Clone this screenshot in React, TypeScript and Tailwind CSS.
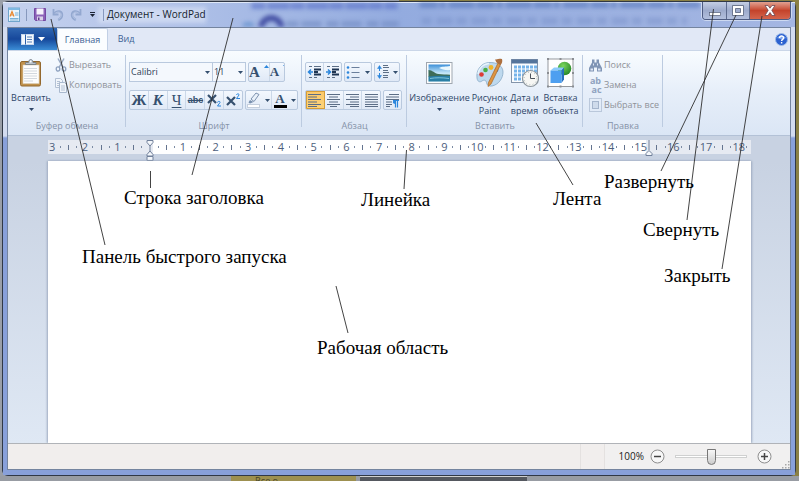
import React from 'react';

type IconProps = { className?: string };

const RULER_COLUMNS = Array.from({ length: 86 }, (_, i) => i);

const CALLOUTS = [
  { text: 'Строка заголовка', place: 'left-[124px] top-[186px]' },
  { text: 'Линейка', place: 'left-[361px] top-[188px]' },
  { text: 'Лента', place: 'left-[553px] top-[187px]' },
  { text: 'Развернуть', place: 'left-[604px] top-[170px]' },
  { text: 'Свернуть', place: 'left-[643px] top-[218px]' },
  { text: 'Закрыть', place: 'left-[664px] top-[264px]' },
  { text: 'Панель быстрого запуска', place: 'left-[82px] top-[245px]' },
  { text: 'Рабочая область', place: 'left-[317px] top-[336px]' },
];

const CALLOUT_LINES = [
  [51, 19, 105, 245],
  [233, 18, 192, 175],
  [150.5, 171, 150.5, 188],
  [406.5, 150, 404, 189],
  [536, 123, 573, 185],
  [336, 286, 348, 333],
  [713.5, 9, 687, 220],
  [736, 15, 661, 171],
  [762, 16, 722, 269],
];

const Arrow: React.FC<IconProps> = ({ className = '' }) => (
  <svg viewBox="0 0 5 3" className={`h-[3px] w-[5px] shrink-0 ${className}`} fill="currentColor">
    <path d="M0 0h5L2.5 3z" />
  </svg>
);

const DocIcon = () => (
  <svg viewBox="0 0 12 15" className="h-[15px] w-3">
    <rect x="0.5" y="1" width="11" height="13.5" fill="#eaf5fc" stroke="#6fa5cc" />
    <path d="M0.5 1h11v2h-11z" fill="#7fb9e2" />
    <path d="M2 9.5 4 4.5 6 9.5M2.8 8h2.5" stroke="#e8862c" strokeWidth="1.2" fill="none" />
    <path d="M7 6h3.500M7 8h3.500M2 11.500h8.500M2 13h8.500" stroke="#79b0d6" />
  </svg>
);

const SaveIcon = () => (
  <svg viewBox="0 0 12 13" className="h-[13px] w-3">
    <path d="M0.500 0.500h11v12H1.500l-1-1z" fill="#8c62b8" stroke="#7448a2" />
    <rect x="2.500" y="0.500" width="7" height="6" fill="#f5f1fb" />
    <rect x="3" y="8.500" width="6" height="4" fill="#d9d2e8" />
    <rect x="4" y="9.500" width="1.500" height="2.500" fill="#5f3a8c" />
  </svg>
);

const UndoIcon: React.FC<IconProps> = ({ className = '' }) => (
  <svg viewBox="0 0 12 13" className={`h-[13px] w-3 ${className}`} fill="none">
    <path d="M1.500 1v5.500h5" stroke="#93a8d0" strokeWidth="1.800" />
    <path d="M2.500 5.500C5 2 10 3 10 7c0 2.500-1.800 4-3.800 5" stroke="#93a8d0" strokeWidth="2.400" />
    <path d="M3 5.500C5.500 3 9.300 4 9.300 7c0 2-1.200 3.200-2.800 4.200" stroke="#b7c6e4" strokeWidth="0.800" />
  </svg>
);

const ClipboardIcon = () => (
  <svg viewBox="0 0 24 28" className="h-7 w-6">
    <rect x="1.500" y="2.500" width="20" height="24.500" rx="1.500" fill="#c0914c" stroke="#93682e" />
    <rect x="4" y="6" width="16" height="18.500" fill="#fdfdfd" stroke="#d9cfbd" strokeWidth="0.600" />
    <path d="M5 9.500h13M5 12h13M5 14.500h13M5 17h13M5 19.500h13M5 22h9" stroke="#d2d8df" />
    <path d="M6.500 5.500V3.500h3c0-4 4.500-4 4.500 0h3v2z" fill="#b9c2cb" stroke="#6f7983" strokeWidth="0.800" />
    <circle cx="11.700" cy="2.500" r="0.900" fill="#fff" />
  </svg>
);

const CutIcon = () => (
  <svg viewBox="0 0 12 14" className="h-[14px] w-3" fill="none">
    <path d="m3 0.500 5 9M9 0.500l-5 9" stroke="#9aabc4" strokeWidth="1.500" />
    <ellipse cx="3" cy="11" rx="1.800" ry="2.100" stroke="#8fa3c0" strokeWidth="1.300" />
    <ellipse cx="9" cy="11" rx="1.800" ry="2.100" stroke="#8fa3c0" strokeWidth="1.300" />
  </svg>
);

const CopyIcon = () => (
  <svg viewBox="0 0 12 15" className="h-[15px] w-3">
    <path d="M0.500 0.500h5l2 2v7h-7z" fill="#f1f5fa" stroke="#b3c1d4" />
    <path d="M2 3.500h3M2 5.500h3M2 7.500h2" stroke="#b3c1d4" />
    <path d="M4.500 4.500h5l2 2v8h-7z" fill="#f1f5fa" stroke="#a9b9ce" />
    <path d="M6 8h4M6 10h4M6 12h4" stroke="#b3c1d4" />
  </svg>
);

const IndentIcon: React.FC<{ right?: boolean }> = ({ right = false }) => (
  <svg viewBox="0 0 15 14" className="h-[14px] w-[15px]" fill="none">
    <path d="M2 1.500h3M7 1.500h7M2 12.500h3M7 12.500h3" stroke="#5d6f86" />
    <path d="M7 4.500h7M7 7h4M7 9.500h7" stroke="#1f3552" strokeWidth="2" />
    <path
      d={right ? 'M1 7h4M3 4.500 5.500 7 3 9.500' : 'M2 7h4M4 4.500 1.500 7 4 9.500'}
      stroke="#2b86dc"
      strokeWidth="1.500"
    />
  </svg>
);

const BulletsIcon = () => (
  <svg viewBox="0 0 15 14" className="h-[14px] w-[15px]">
    <path d="M5.500 2.500h8M5.500 7.500h8M5.500 12.500h8" stroke="#6a7f9c" />
    <circle cx="2" cy="2.500" r="1.300" fill="#2b86dc" />
    <circle cx="2" cy="7.500" r="1.300" fill="#2b86dc" />
    <circle cx="2" cy="12.500" r="1.300" fill="#2b86dc" />
  </svg>
);

const SpacingIcon = () => (
  <svg viewBox="0 0 12 16" className="h-4 w-3" fill="none">
    <path d="M2.500 2v12" stroke="#2b86dc" strokeDasharray="5 2" />
    <path d="M0.500 4.500 2.500 1.500l2 3zM0.500 11.500l2 3 2-3z" fill="#2b86dc" stroke="#2b86dc" strokeWidth="0.500" />
    <path d="M6 1.500h5M6 3.500h6M6 6.500h5M6 8.500h6M6 11.500h5M6 13.500h5" stroke="#5d6f86" />
  </svg>
);

const ALIGN_PATHS = {
  left: 'M0 1.500h13M0 4h9M0 6.500h13M0 9h9M0 11.500h13M0 13.500h9',
  center: 'M0 1.500h13M2 4h9M0 6.500h13M2 9h9M0 11.500h13M3 13.500h7',
  right: 'M0 1.500h13M4 4h9M0 6.500h13M4 9h9M0 11.500h13M4 13.500h9',
  justify: 'M0 1.500h13M0 4h13M0 6.500h13M0 9h13M0 11.500h13M0 13.500h13',
};

const AlignIcon: React.FC<{ kind: keyof typeof ALIGN_PATHS }> = ({ kind }) => (
  <svg viewBox="0 0 13 15" className="h-[15px] w-[13px]">
    <path d={ALIGN_PATHS[kind]} stroke="#5b6d85" />
  </svg>
);

const ParagraphIcon = () => (
  <svg viewBox="0 0 14 15" className="h-[15px] w-[14px]">
    <path d="M3 1.500h10M0 4h13M0 6.500h13M0 9h6M0 11.500h6M0 13.500h4" stroke="#5b6d85" />
    <path d="M9.500 7.500v7M11.500 7.500v7M7 7.500h6" stroke="#2b86dc" strokeWidth="1.200" />
    <path d="M9.500 7C6 7 6 11 9.500 11z" fill="#2b86dc" />
  </svg>
);

const PenIcon = () => (
  <svg viewBox="0 0 14 16" className="h-4 w-[14px]">
    <path d="m4 7 5-6 3 1.500L7 9.500z" fill="#e9f1fa" stroke="#6f86a5" strokeWidth="0.900" />
    <path d="m3 8 3.500 2-3.500 1.500-1.500-1z" fill="#7990ae" />
    <rect x="0.500" y="12.500" width="12" height="3" fill="#fff" stroke="#c5cfdd" />
  </svg>
);

const PictureIcon = () => (
  <svg viewBox="0 0 27 24" className="h-6 w-[27px]">
    <defs>
      <linearGradient id="sky" x1="0" y1="0" x2="0" y2="1">
        <stop offset="0" stopColor="#3c8fd8" />
        <stop offset="0.500" stopColor="#c3e6f8" />
        <stop offset="1" stopColor="#d5f0fa" />
      </linearGradient>
    </defs>
    <rect x="0.500" y="1.500" width="25.500" height="21" fill="#fdfdfd" stroke="#9fa7b0" />
    <rect x="2.500" y="3.500" width="21.500" height="17" fill="url(#sky)" />
    <path d="M13 7c3-2 7-1 11-2v4c-4 1-8-1-11-2z" fill="#eaf7fd" />
    <path d="M2.500 9c4 0 6 3.500 10 4s7 .5 11.500.8v2.200H2.500z" fill="#3e6d58" />
    <path d="M2.500 15.500c8-1 15-.8 21.500-.5v5.500H2.500z" fill="#2a7fa5" />
    <path d="M4 17.500c6-1 12-1 19 0" stroke="#7cc3da" fill="none" />
  </svg>
);

const PaintIcon = () => (
  <svg viewBox="0 0 28 30" className="h-[30px] w-7">
    <path
      d="M13 4.500C5 5 0 12 1 20c.5 4 3 4.500 5 3s4-1 4.500 1.500c.5 3 2.500 4 5.500 3.500 7-1.500 11-8 11-14C27 8 21 4 13 4.500z"
      fill="#bed9ee"
      stroke="#88a9c5"
      strokeWidth="0.800"
    />
    <path d="M13 5.500C7 6 3 10.500 2 16" stroke="#e8f4fc" strokeWidth="1.500" fill="none" />
    <circle cx="5.500" cy="16.500" r="2.300" fill="#dc3b36" />
    <circle cx="9.500" cy="12" r="2.300" fill="#49ae47" />
    <circle cx="15" cy="9.500" r="2.400" fill="#f0b52c" />
    <circle cx="20.500" cy="12" r="1.900" fill="#3973d0" />
    <path d="m22 5 2.500 1.500L15 26l-3 2.500.5-4z" fill="#dd9542" stroke="#a76524" strokeWidth="0.700" />
    <path d="M20.500 4.500 19 1.500c2 0 3-1.500 7-.5.500 2 .500 4-1.500 6z" fill="#ad7040" />
  </svg>
);

const CalendarIcon = () => (
  <svg viewBox="0 0 28 30" className="h-[30px] w-7">
    <rect x="0.500" y="1.500" width="26" height="23" fill="#fbfdff" stroke="#8495aa" />
    <rect x="0.500" y="1.500" width="26" height="4" fill="#54749b" />
    <g fill="#76b4ea">
      {[7.5, 11.5, 15.5, 19.5].map((y) =>
        [3, 7, 11, 15, 19, 23].map((x) => <rect key={`${x}-${y}`} x={x} y={y} width="3" height="3" />),
      )}
    </g>
    <circle cx="19.500" cy="20.500" r="8" fill="#f7f7f4" stroke="#8d969d" strokeWidth="1.200" />
    <circle cx="19.500" cy="20.500" r="6.300" fill="none" stroke="#9aa" strokeDasharray="0.800 2.500" />
    <path d="M19.500 15.500v5h4.500" stroke="#4b535b" fill="none" />
  </svg>
);

const ObjectIcon = () => (
  <svg viewBox="0 0 27 30" className="h-[30px] w-[27px]">
    <defs>
      <radialGradient id="ball" cx="0.400" cy="0.300" r="0.800">
        <stop offset="0" stopColor="#7bd65d" />
        <stop offset="1" stopColor="#1d7d22" />
      </radialGradient>
    </defs>
    <rect x="1" y="1" width="25" height="27.500" fill="#fff" stroke="#7d8085" strokeWidth="0.800" />
    <circle cx="17.500" cy="10.500" r="6.800" fill="url(#ball)" />
    <path d="M3.500 12.500 7 9.500h10l-2.500 3z" fill="#8ccbfb" />
    <path d="M14.500 12.500 17 9.500v12l-2.500 3.500z" fill="#286fc0" />
    <rect x="3.500" y="12.500" width="11" height="12.500" fill="#4d9ff0" />
    <path
      d="M0 0h2v2H0zM12.500 0h2v2h-2zM25 0h2v2h-2zM0 14h2v2H0zM25 14h2v2h-2zM0 27.500h2v2H0zM12.500 27.500h2v2h-2zM25 27.500h2v2h-2z"
      fill="#8a8d92"
    />
  </svg>
);

const FindIcon = () => (
  <svg viewBox="0 0 13 13" className="h-[13px] w-[13px]" fill="#8095b5">
    <path d="M3 0.500h2.500v3H7.500v-3H10v3l3 5.500v3.500H8V8.500H5v4H0V9L3 3.500z" />
    <path d="M1.500 9.500h2.500v2H1.500zM9 9.500h2.500v2H9zM4 4.500h1v2H4zM8 4.500h1v2H8z" fill="#dfe8f5" />
  </svg>
);

const SelectAllIcon = () => (
  <svg viewBox="0 0 13 14" className="h-[14px] w-[13px]" fill="none">
    <rect x="0.500" y="0.500" width="12" height="13" stroke="#93a4bf" strokeDasharray="1 1" />
    <rect x="3.500" y="3.500" width="6" height="7" fill="#cfdbeb" stroke="#a5b5cc" />
  </svg>
);

const Group: React.FC<{ label: string; className: string; children: React.ReactNode }> = ({
  label,
  className,
  children,
}) => (
  <section
    aria-label={label}
    className={`relative flex shrink-0 flex-col pt-1 after:absolute after:right-0 after:top-1 after:bottom-2 after:w-px after:bg-[#bccbe0] after:content-[''] ${className}`}
  >
    <div className="flex-1">{children}</div>
    <div className="h-[18px] text-center text-[9px] leading-[18px] text-[#8592a8]">{label}</div>
  </section>
);

const Strip: React.FC<{ className?: string; children: React.ReactNode }> = ({ className = '', children }) => (
  <div
    className={`flex h-5 divide-x divide-[#cbd8e8] overflow-hidden rounded-xs border border-[#b9c9de] bg-linear-to-b from-[#f3f8fe] to-[#e0e9f6] text-[#35506f] ${className}`}
  >
    {children}
  </div>
);

const Tool: React.FC<{ label: string; className?: string; children: React.ReactNode }> = ({
  label,
  className = '',
  children,
}) => (
  <button type="button" aria-label={label} className={`flex flex-1 items-center justify-center gap-1 ${className}`}>
    {children}
  </button>
);

const BigButton: React.FC<{ icon: React.ReactNode; className: string; children: React.ReactNode }> = ({
  icon,
  className,
  children,
}) => (
  <button
    type="button"
    className={`flex shrink-0 flex-col items-center text-[9px] leading-[13px] text-[#2e4668] ${className}`}
  >
    <span className="flex h-9 items-center">{icon}</span>
    {children}
  </button>
);

const SmallButton: React.FC<{ icon: React.ReactNode; children: React.ReactNode }> = ({ icon, children }) => (
  <button
    type="button"
    className="flex h-5 items-center gap-[2px] whitespace-nowrap text-[9px] text-[#8f9299]"
  >
    <span className="flex w-[13px] justify-center">{icon}</span>
    {children}
  </button>
);

const TitleBar = () => (
  <header className="relative flex h-[25px] items-center overflow-hidden bg-linear-to-r from-[#c6d2ee] via-[#93abdf] to-[#a4b6e2] pl-[5px] shadow-[inset_0_1px_0_#dfe8f8]">
    <svg
      className="absolute inset-0 h-full w-full blur-[2px]"
      preserveAspectRatio="none"
      viewBox="0 0 791 25"
      fill="none"
    >
      <path d="M248 4h146" stroke="#5c74cb" strokeWidth="6" strokeDasharray="14 2 22 1" opacity="0.700" />
      <path d="M240 24a7 7 0 0 1 10 0" stroke="#6a94cf" strokeWidth="4" />
      <path d="M258 26a10 10 0 0 1 20 0" stroke="#4450a4" strokeWidth="6" />
      <path d="M283 22h112" stroke="#7089bf" strokeWidth="6" strokeDasharray="12 3 20 5" opacity="0.600" />
      <path d="M416 3h280" stroke="#4a6cb6" strokeWidth="5" strokeDasharray="18 2 6 3 26 2" opacity="0.600" />
      <path d="M418 19h265" stroke="#7089c4" strokeWidth="7" strokeDasharray="10 5 16 4" opacity="0.400" />
      <path d="M95 13h108" stroke="#eaf0fb" strokeWidth="16" opacity="0.500" />
    </svg>
    <div className="relative flex items-center">
      <DocIcon />
      <span className="ml-[6px] h-3 w-px bg-[#8798bd]" />
      <button type="button" aria-label="Сохранить" className="ml-[7px]">
        <SaveIcon />
      </button>
      <button type="button" aria-label="Отменить" className="ml-[6px]">
        <UndoIcon />
      </button>
      <button type="button" aria-label="Вернуть" className="ml-[6px]">
        <UndoIcon className="-scale-x-100" />
      </button>
      <button
        type="button"
        aria-label="Настройка панели быстрого доступа"
        className="ml-2 flex flex-col items-center gap-px text-[#1c2535]"
      >
        <span className="h-px w-[5px] bg-[#1c2535]" />
        <Arrow />
      </button>
      <span className="ml-2 h-3 w-px bg-[#8798bd]" />
      <h1 className="ml-[3px] whitespace-nowrap text-[10px] text-[#151d2d]">Документ - WordPad</h1>
    </div>
    <div className="relative mr-1 ml-auto flex h-[18px] self-start overflow-hidden rounded-b-[4px] border border-t-0 border-[#4d5b80] shadow-[0_0_0_1px_#cdd9f1]">
      <button
        type="button"
        aria-label="Свернуть"
        className="flex w-6 items-center justify-center border-r border-[#5d6b8e] bg-linear-to-b from-[#c4cee4] via-[#9dabcc] to-[#b3c0dd]"
      >
        <svg viewBox="0 0 12 12" className="h-3 w-3">
          <rect x="0.500" y="7.500" width="11" height="3" fill="#fff" stroke="#535f78" strokeWidth="0.700" />
        </svg>
      </button>
      <button
        type="button"
        aria-label="Развернуть"
        className="flex w-[23px] items-center justify-center border-r border-[#5d6b8e] bg-linear-to-b from-[#c4cee4] via-[#9dabcc] to-[#b3c0dd]"
      >
        <svg viewBox="0 0 12 11" className="h-[11px] w-3">
          <path d="M0.500 0.500h11v10h-11zM3.500 3.500v4h5v-4z" fill="#fff" fillRule="evenodd" stroke="#535f78" strokeWidth="0.800" />
        </svg>
      </button>
      <button
        type="button"
        aria-label="Закрыть"
        className="flex w-10 items-center justify-center bg-linear-to-b from-[#e0a091] via-[#c4432b] to-[#d4644c]"
      >
        <svg viewBox="0 0 12 11" className="h-[11px] w-3">
          <path
            d="M1 0.500h3L6 3.200 8 0.500h3L7.800 5.300 11 10.500H8L6 7.500l-2 3H1l3.200-5.200z"
            fill="#fff"
            stroke="#6d4a55"
            strokeWidth="0.800"
          />
        </svg>
      </button>
    </div>
  </header>
);

const Tabs = () => (
  <nav className="flex h-[22px] bg-[#e1e8f6]">
    <button
      type="button"
      aria-label="Меню"
      className="flex w-[49px] items-center justify-center gap-1 bg-linear-to-b from-[#2f66b1] via-[#17489b] to-[#3c8dd6] text-white"
    >
      <svg viewBox="0 0 13 11" className="h-[11px] w-[13px]">
        <rect x="0.500" y="0.500" width="12" height="10" fill="#f4f8fd" stroke="#c7d7ec" />
        <path d="M4.500 0.500v10" stroke="#2b5ea8" />
        <path d="M6 3h5M6 5.500h5M6 8h5" stroke="#5780b8" />
      </svg>
      <svg viewBox="0 0 7 4" className="h-1 w-[7px]" fill="#fff">
        <path d="M0 0h7L3.500 4z" />
      </svg>
    </button>
    <button
      type="button"
      className="w-[51px] rounded-t-xs border border-b-0 border-[#c2d0e5] bg-[#fbfdff] text-center text-[9px] text-[#3c5f95]"
    >
      Главная
    </button>
    <button type="button" className="w-9 text-center text-[9px] text-[#3c5f95]">
      Вид
    </button>
    <button type="button" aria-label="Справка" className="mr-[2px] ml-auto">
      <svg viewBox="0 0 13 13" className="h-[13px] w-[13px]">
        <circle cx="6.500" cy="6.500" r="6" fill="#2d62d0" stroke="#9dbbe8" />
        <path d="M2 5a5 4 0 0 1 9 0c-3 1.500-6 1.500-9 0z" fill="#7ba4ee" />
        <path d="M4.600 5c0-2.600 4-2.600 4 0 0 1.400-2 1.400-2 3M6.600 9v1.500" stroke="#fff" strokeWidth="1.400" fill="none" />
      </svg>
    </button>
  </nav>
);

const FontGroup = () => (
  <Group label="Шрифт" className="w-[176px]">
    <div className="mt-[7px] ml-[3px] flex gap-[2px]">
      <div className="flex text-[#35506f]">
        <label className="relative flex items-center">
          <select
            aria-label="Семейство шрифтов"
            className="h-5 w-[84px] appearance-none border border-[#b9c9de] bg-[#f4f8fd] pl-[1px] text-[9px] text-[#2e3f58]"
          >
            <option>Calibri</option>
          </select>
          <Arrow className="pointer-events-none absolute right-[3px]" />
        </label>
        <label className="relative flex items-center">
          <select
            aria-label="Размер шрифта"
            className="h-5 w-[33px] appearance-none border border-l-0 border-[#b9c9de] bg-[#f4f8fd] pl-[1px] text-[9px] text-[#2e3f58]"
          >
            <option>11</option>
          </select>
          <Arrow className="pointer-events-none absolute right-[3px]" />
        </label>
      </div>
      <Strip className="w-[37px] font-['Liberation_Serif',serif] font-bold">
        <Tool label="Увеличить размер" className="gap-0">
          <span className="text-[15px] leading-5">A</span>
          <Arrow className="-mt-3 rotate-180 text-[#2b86dc]" />
        </Tool>
        <Tool label="Уменьшить размер" className="gap-0">
          <span className="text-[13px] leading-5">A</span>
          <Arrow className="-mt-3 text-[#2b86dc]" />
        </Tool>
      </Strip>
    </div>
    <div className="mt-2 ml-[3px] flex gap-[2px]">
      <Strip className="w-[114px] font-['Liberation_Serif',serif] text-[15px] font-bold leading-4">
        <Tool label="Полужирный">Ж</Tool>
        <Tool label="Курсив" className="italic">
          К
        </Tool>
        <Tool label="Подчеркнутый" className="font-normal underline underline-offset-2">
          Ч
        </Tool>
        <Tool label="Зачеркнутый" className="font-['Liberation_Sans',sans-serif] text-[9px] line-through">
          abc
        </Tool>
        <Tool label="Подстрочный знак">
          <svg viewBox="0 0 14 14" className="h-[14px] w-[14px]" fill="none">
            <path d="m1 2 8 8M9 2l-8 8" stroke="#35506f" strokeWidth="2.200" />
            <path d="M10.500 9.500c0-1.500 3-1.500 2.500 0L10.500 13H14" stroke="#2b86dc" />
          </svg>
        </Tool>
        <Tool label="Надстрочный знак">
          <svg viewBox="0 0 14 14" className="h-[14px] w-[14px]" fill="none">
            <path d="m1 4 8 8M9 4l-8 8" stroke="#35506f" strokeWidth="2.200" />
            <path d="M10.500 2c0-1.500 3-1.500 2.500 0L10.500 5.500H14" stroke="#2b86dc" />
          </svg>
        </Tool>
      </Strip>
      <Strip className="w-[53px]">
        <Tool label="Цвет выделения текста">
          <PenIcon />
          <Arrow />
        </Tool>
        <Tool label="Цвет текста">
          <span className="flex flex-col items-center">
            <span className="font-['Liberation_Serif',serif] text-[13px] font-bold leading-[12px]">A</span>
            <span className="h-[3px] w-[13px] bg-black" />
          </span>
          <Arrow />
        </Tool>
      </Strip>
    </div>
  </Group>
);

const ParagraphGroup = () => (
  <Group label="Абзац" className="w-[105px]">
    <div className="mt-[7px] ml-[3px] flex gap-[2px]">
      <Strip className="w-[37px]">
        <Tool label="Уменьшить отступ">
          <IndentIcon />
        </Tool>
        <Tool label="Увеличить отступ">
          <IndentIcon right />
        </Tool>
      </Strip>
      <Strip className="w-7">
        <Tool label="Список">
          <BulletsIcon />
          <Arrow />
        </Tool>
      </Strip>
      <Strip className="w-[26px]">
        <Tool label="Межстрочный интервал">
          <SpacingIcon />
          <Arrow />
        </Tool>
      </Strip>
    </div>
    <div className="mt-2 ml-[3px] flex gap-[2px]">
      <Strip className="w-[76px]">
        <Tool
          label="По левому краю"
          className="bg-linear-to-b from-[#fbc868] to-[#fbd37b] outline-1 -outline-offset-1 outline-[#d59d38]"
        >
          <AlignIcon kind="left" />
        </Tool>
        <Tool label="По центру">
          <AlignIcon kind="center" />
        </Tool>
        <Tool label="По правому краю">
          <AlignIcon kind="right" />
        </Tool>
        <Tool label="По ширине">
          <AlignIcon kind="justify" />
        </Tool>
      </Strip>
      <Strip className="w-[19px]">
        <Tool label="Абзац">
          <ParagraphIcon />
        </Tool>
      </Strip>
    </div>
  </Group>
);

const Ribbon = () => (
  <div className="flex h-[86px] overflow-hidden border-t border-b border-t-[#cad6e8] border-b-[#b3c1d6] bg-linear-to-b from-[#f8fcff] via-[#e6eef9] to-[#dbe6f5]">
    <Group label="Буфер обмена" className="w-[118px]">
      <div className="flex">
        <BigButton icon={<ClipboardIcon />} className="w-[46px]">
          <span>Вставить</span>
          <Arrow className="mt-1" />
        </BigButton>
        <div className="flex flex-col">
          <SmallButton icon={<CutIcon />}>Вырезать</SmallButton>
          <SmallButton icon={<CopyIcon />}>Копировать</SmallButton>
        </div>
      </div>
    </Group>
    <FontGroup />
    <ParagraphGroup />
    <Group label="Вставить" className="w-[176px]">
      <div className="flex">
        <BigButton icon={<PictureIcon />} className="w-[65px]">
          <span>Изображение</span>
          <Arrow className="mt-1" />
        </BigButton>
        <BigButton icon={<PaintIcon />} className="w-[35px]">
          <span>
            Рисунок
            <br />
            Paint
          </span>
        </BigButton>
        <BigButton icon={<CalendarIcon />} className="w-[35px]">
          <span className="whitespace-nowrap">
            Дата и
            <br />
            время
          </span>
        </BigButton>
        <BigButton icon={<ObjectIcon />} className="w-[37px]">
          <span>
            Вставка
            <br />
            объекта
          </span>
        </BigButton>
      </div>
    </Group>
    <Group label="Правка" className="w-20">
      <div className="ml-[6px] flex flex-col">
        <SmallButton icon={<FindIcon />}>Поиск</SmallButton>
        <SmallButton
          icon={
            <span className="flex flex-col text-[9px] font-bold leading-[9px] text-[#8fa2c0]">
              <span>ab</span>
              <span className="pl-[2px]">ac</span>
            </span>
          }
        >
          Замена
        </SmallButton>
        <SmallButton icon={<SelectAllIcon />}>Выбрать все</SmallButton>
      </div>
    </Group>
  </div>
);

const RulerMark: React.FC<{ index: number }> = ({ index }) => {
  if (index === 12) {
    return (
      <svg viewBox="0 0 8 22" className="h-[22px] w-2 shrink-0 self-start" fill="#f4f7fb" stroke="#71809a">
        <path d="M1 0.500h6v2l-3 3.500-3-3.500zM4 6v5M4 11l3 3.500v1.500H1v-1.500zM1 16.500h6v4H1z" />
      </svg>
    );
  }
  if (index === 73) {
    return (
      <svg viewBox="0 0 8 16" className="h-4 w-2 shrink-0 self-start" fill="#f4f7fb" stroke="#71809a">
        <path d="M4 0v10M4 10.500l3 3v2H1v-2z" />
      </svg>
    );
  }
  if (index % 4 === 0) return <span className="text-[11px] leading-[14px]">{Math.abs(index / 4 - 3)}</span>;
  return <span className={index % 2 ? 'h-[2px] w-px bg-[#7c8ba3]' : 'h-[5px] w-px bg-[#64748f]'} />;
};

const Ruler = () => (
  <div className="h-[25px] bg-[#c8d2e2] pt-1 pr-[39px] pl-10">
    <div className="grid h-[14px] grid-cols-[repeat(86,minmax(0,1fr))] bg-[linear-gradient(to_right,#e6eaf2_15%,#fff_15%,#fff_85%,#e6eaf2_85%)] text-[#4c5e7c]">
      {RULER_COLUMNS.map((i) => (
        <div key={i} className="flex h-[14px] items-center justify-center">
          <RulerMark index={i} />
        </div>
      ))}
    </div>
  </div>
);

const StatusBar = () => (
  <footer className="flex h-[26px] items-center border-t border-[#b0b3b8] bg-[#f1eeed] text-[#222]">
    <div className="ml-auto h-full w-6 border-l border-[#e4e1e0]" />
    <div className="flex h-full items-center gap-[6px] border-l border-[#e4e1e0] bg-[#f1f0f0] pr-[18px] pl-[14px]">
      <span className="text-[10px]">100%</span>
      <button type="button" aria-label="Уменьшить масштаб">
        <svg viewBox="0 0 15 15" className="h-[15px] w-[15px]" fill="#f7f7f7">
          <circle cx="7.500" cy="7.500" r="6.500" stroke="#8e8e8e" />
          <path d="M4 7.500h7" stroke="#444" strokeWidth="1.500" />
        </svg>
      </button>
      <input
        type="range"
        aria-label="Масштаб"
        defaultValue={50}
        className="mx-1 h-[18px] w-[72px] appearance-none bg-transparent [&::-webkit-slider-runnable-track]:h-[3px] [&::-webkit-slider-runnable-track]:border [&::-webkit-slider-runnable-track]:border-[#cfd0d0] [&::-webkit-slider-runnable-track]:bg-white [&::-webkit-slider-thumb]:mt-[-7px] [&::-webkit-slider-thumb]:h-4 [&::-webkit-slider-thumb]:w-[9px] [&::-webkit-slider-thumb]:appearance-none [&::-webkit-slider-thumb]:rounded-b-[5px] [&::-webkit-slider-thumb]:border [&::-webkit-slider-thumb]:border-[#777] [&::-webkit-slider-thumb]:bg-linear-to-b [&::-webkit-slider-thumb]:from-[#f7f7f7] [&::-webkit-slider-thumb]:to-[#cdcdcd]"
      />
      <button type="button" aria-label="Увеличить масштаб">
        <svg viewBox="0 0 15 15" className="h-[15px] w-[15px]" fill="#f7f7f7">
          <circle cx="7.500" cy="7.500" r="6.500" stroke="#8e8e8e" />
          <path d="M4 7.500h7M7.500 4v7" stroke="#444" strokeWidth="1.500" />
        </svg>
      </button>
    </div>
    <svg viewBox="0 0 8 8" className="-ml-2 h-2 w-2 self-end" fill="#a8a8a8">
      <path d="M6 0h1.500v1.500H6zM3 3h1.500v1.500H3zM6 3h1.500v1.500H6zM0 6h1.500v1.500H0zM3 6h1.500v1.500H3zM6 6h1.500v1.500H6z" />
    </svg>
  </footer>
);

const Callouts = () => (
  <div className="pointer-events-none absolute inset-0 font-['Liberation_Serif',serif] text-[19px] leading-6 text-black">
    <svg className="absolute inset-0 h-full w-full" stroke="#2f2f2f" strokeWidth="0.900">
      {CALLOUT_LINES.map(([x1, y1, x2, y2]) => (
        <line key={`${x1}-${y1}`} x1={x1} y1={y1} x2={x2} y2={y2} />
      ))}
    </svg>
    {CALLOUTS.map((c) => (
      <span key={c.text} className={`absolute whitespace-nowrap ${c.place}`}>
        {c.text}
      </span>
    ))}
  </div>
);

const App: React.FC = () => {
  return (
    <div className="relative flex min-h-screen flex-col overflow-hidden bg-linear-to-r from-[#9a9fa8] from-50% to-[#8a8045] to-50% pt-[1px] font-['Open_Sans','Noto_Sans',sans-serif]">
      <main className="mr-[3px] ml-[2px] flex flex-1 flex-col rounded-md border border-[#303846] bg-[#88a0da] shadow-[inset_0_0_0_1px_#bccbee]">
        <TitleBar />
        <div className="flex flex-1 flex-col bg-linear-to-b from-[#d3dcf0] from-[109px] to-[#88a0da] to-[111px] px-[4px] pb-[5px]">
          <div className="flex flex-1 flex-col border border-[#74849f]">
            <Tabs />
            <Ribbon />
            <Ruler />
            <div className="flex flex-1 bg-linear-to-b from-[#c8d2e2] to-[#dfe8f4] pr-[39px] pl-10">
              <div
                role="textbox"
                aria-label="Документ"
                className="flex-1 bg-white shadow-[-1px_0_2px_#9eabc0,1px_0_2px_#9eabc0]"
              />
            </div>
            <StatusBar />
          </div>
        </div>
      </main>
      <div className="flex h-[5px] overflow-hidden bg-[#989ca3] text-[9px] leading-[9px] text-[#494627]">
        <div className="ml-[231px] w-[125px] bg-[#9d9050] pl-6">Все о</div>
        <div className="ml-1 w-[167px] border-t border-[#d0d0d0] bg-[#55585f]" />
      </div>
      <Callouts />
    </div>
  );
};

export default App;
